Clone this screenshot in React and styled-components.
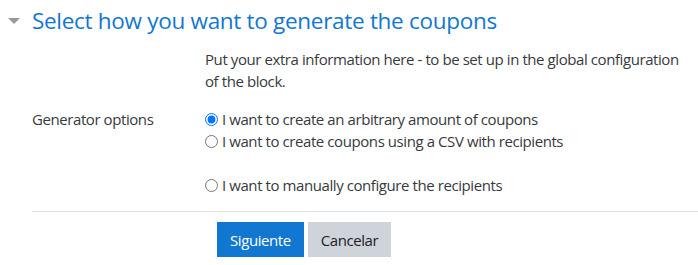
import React from "react";
import styled, { createGlobalStyle } from "styled-components";

const GlobalStyle = createGlobalStyle`
  body {
    margin: 0;
    background: #fff;
    font-family: "Open Sans", "Noto Sans", sans-serif;
    color: #373a3c;
  }
`;

const Form = styled.form`
  width: 698px;
  padding-top: 7px;
`;

const Legend = styled.div`
  display: flex;
  align-items: center;
  padding-left: 8px;
  height: 27px;
`;

const Caret = styled.span`
  width: 0;
  height: 0;
  border-left: 6px solid transparent;
  border-right: 6px solid transparent;
  border-top: 6px solid #999;
  margin-right: 12px;
`;

const Title = styled.h3`
  margin: 0;
  font-size: 22.5px;
  font-weight: 400;
  line-height: 27px;
  letter-spacing: -0.3px;
  color: #1177d1;
  white-space: nowrap;
`;

const Body = styled.div`
  padding: 14px 0 0 32px;
  font-size: 15px;
  line-height: 22px;
  letter-spacing: -0.42px;
`;

const Row = styled.div`
  display: grid;
  grid-template-columns: 173px 1fr;
  margin-bottom: ${(p) => p.$gap || 0}px;
`;

const Label = styled.div``;

const Text = styled.div`
  padding-right: 10px;
`;

const RadioList = styled.div`
  display: flex;
  flex-direction: column;
`;

const RadioRow = styled.label`
  display: flex;
  align-items: center;
  height: 22px;
  margin-top: ${(p) => (p.$spaced ? 22 : 0)}px;
`;

const Radio = styled.input`
  width: 13px;
  height: 13px;
  margin: 0 4px 0 0;
`;

const Divider = styled.hr`
  border: 0;
  border-top: 1px solid #dee2e6;
  margin: 15px 0 10px 0;
`;

const Buttons = styled.div`
  display: flex;
  gap: 4px;
  padding-left: 185px;
`;

const Button = styled.button`
  height: 35px;
  border: 0;
  padding: 0 13px;
  font-family: inherit;
  font-size: 15px;
  letter-spacing: -0.42px;
  background: ${(p) => (p.$primary ? "#1177d1" : "#ced4da")};
  color: ${(p) => (p.$primary ? "#fff" : "#1d2125")};
`;

export default function App() {
  return (
    <>
      <GlobalStyle />
      <Form onSubmit={(e) => e.preventDefault()}>
        <Legend>
          <Caret />
          <Title>Select how you want to generate the coupons</Title>
        </Legend>
        <Body>
          <Row $gap={16}>
            <Label />
            <Text>
              Put your extra information here - to be set up in the global configuration of the block.
            </Text>
          </Row>
          <Row>
            <Label>Generator options</Label>
            <RadioList>
              <RadioRow>
                <Radio type="radio" name="gen" defaultChecked />
                I want to create an arbitrary amount of coupons
              </RadioRow>
              <RadioRow>
                <Radio type="radio" name="gen" />
                I want to create coupons using a CSV with recipients
              </RadioRow>
              <RadioRow $spaced>
                <Radio type="radio" name="gen" />
                I want to manually configure the recipients
              </RadioRow>
            </RadioList>
          </Row>
          <Divider />
          <Buttons>
            <Button $primary>Siguiente</Button>
            <Button>Cancelar</Button>
          </Buttons>
        </Body>
      </Form>
    </>
  );
}
